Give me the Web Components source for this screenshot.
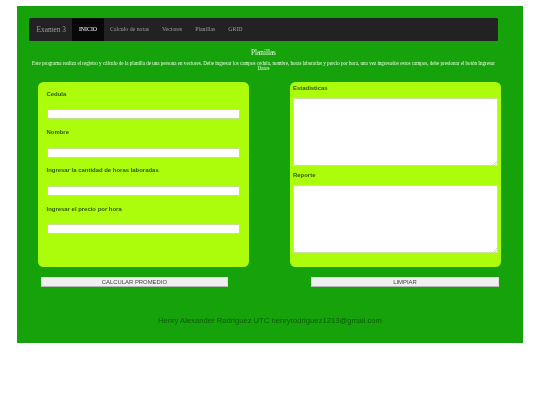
<!DOCTYPE html>
<html lang="es"><head><meta charset="utf-8"><title>Planillas</title>
<style>html,body{margin:0;padding:0;background:#fff}</style></head>
<body>
<x-page>
  <x-nav slot="nav"></x-nav>
  <x-intro slot="intro" heading="Planillas">Este programa realiza el registro y cálculo de la planilla de una persona en vectores. Debe ingresar los campos cedula, nombre, horas laboradas y precio por hora, una vez ingresados estos campos, debe presionar el botón Ingresar Datos</x-intro>
  <x-form-panel slot="left">
    <x-field label="Cedula"></x-field>
    <x-field label="Nombre"></x-field>
    <x-field label="Ingresar la cantidad de horas laboradas"></x-field>
    <x-field label="Ingresar el precio por hora"></x-field>
  </x-form-panel>
  <x-stats-panel slot="right"></x-stats-panel>
  <x-btn slot="btn1">CALCULAR PROMEDIO</x-btn>
  <x-btn slot="btn2">LIMPIAR</x-btn>
  <x-foot slot="foot">Henry Alexander Rodriguez UTC henryrodriguez1213@gmail.com</x-foot>
</x-page>
<script>
function def(name, html, init){
  customElements.define(name, class extends HTMLElement{
    constructor(){super();this.attachShadow({mode:'open'}).innerHTML=html;}
    connectedCallback(){ if(init) init(this); }
  });
}
def('x-page',`<style>
:host{display:block;box-sizing:border-box;width:506px;height:337px;margin:6px 0 0 17px;background:#16a20a;padding:12px 0 0 0;filter:blur(.3px)}
.nav{margin:0 25px 0 12px}
.cols{display:grid;grid-template-columns:211px 211px;column-gap:41px;margin:0 0 0 21px}
.btns{display:grid;grid-template-columns:187.5px 187.5px;column-gap:83px;margin:9.5px 0 0 23.7px}
</style>
<div class="nav"><slot name="nav"></slot></div>
<slot name="intro"></slot>
<div class="cols"><slot name="left"></slot><slot name="right"></slot></div>
<div class="btns"><slot name="btn1"></slot><slot name="btn2"></slot></div>
<slot name="foot"></slot>`);
def('x-nav',`<style>
:host{display:flex;align-items:stretch;height:22.5px;background:#222;box-sizing:border-box;border-radius:1.6px;font:5.85px "Liberation Serif",serif;color:#9d9d9d}
.brand{font-size:7.3px;padding:0 6.4px 0 7.6px;display:flex;align-items:center;color:#9d9d9d}
a{display:flex;align-items:center;padding:0 6.5px;white-space:nowrap}
a.on{background:#080808;color:#fff;}
</style>
<span class="brand">Examen 3</span><a class="on">INICIO</a><a>Calculo de notas</a><a>Vectores</a><a>Planillas</a><a>GRID</a>`);
def('x-intro',`<style>
:host{display:block;height:41.5px;box-sizing:border-box;padding:8.5px 25px 0 12px;text-align:center;font-family:"Liberation Serif",serif;color:#eefbe8}
h2{margin:0 0 3.5px;font-weight:400;font-size:7.2px;line-height:8px;color:#f2fcee}
p{margin:0;font-size:5.07px;line-height:5.5px}
</style><h2></h2><p><slot></slot></p>`, el=>{el.shadowRoot.querySelector('h2').textContent=el.getAttribute('heading');});
def('x-form-panel',`<style>
:host{display:block;box-sizing:border-box;height:185px;background:#acfd0b;border-radius:5.5px;padding:7.5px 9px 0 8.5px}
</style><slot></slot>`);
def('x-field',`<style>
:host{display:block;height:38.4px;font:bold 5.95px/9px "Liberation Sans",sans-serif;color:#2f5a00}
label{display:block;height:20px}
input{display:block;box-sizing:border-box;width:100%;height:10px;margin:-.4px 0 0;padding:0;border:.6px solid #c6dc90;background:#fff;border-radius:.6px}
</style><label></label><input type="text">`, el=>{el.shadowRoot.querySelector('label').textContent=el.getAttribute('label');});
def('x-stats-panel',`<style>
:host{display:block;box-sizing:border-box;height:185px;background:#acfd0b;border-radius:5.5px;padding:2px 3px 0 3px;font:bold 5.95px/8px "Liberation Sans",sans-serif;color:#2f5a00}
label{display:block;height:13.5px;padding-top:0;box-sizing:border-box;line-height:8px}
label.second{height:18.5px;padding-top:5px}
.ta{box-sizing:border-box;height:68.5px;background:#fff;border:.7px solid #cfdfa0;border-radius:.8px;position:relative}
svg{position:absolute;right:.5px;bottom:.5px}
</style>
<label>Estadisticas</label>
<div class="ta" role="textbox"><svg width="4" height="4" viewBox="0 0 4 4"><path d="M0 4L4 0M2 4L4 2" stroke="#aaa" stroke-width=".5"/></svg></div>
<label class="second">Reporte</label>
<div class="ta" role="textbox"><svg width="4" height="4" viewBox="0 0 4 4"><path d="M0 4L4 0M2 4L4 2" stroke="#aaa" stroke-width=".5"/></svg></div>`);
def('x-btn',`<style>
:host{display:flex;align-items:center;justify-content:center;box-sizing:border-box;height:10px;background:#efefef;border:.4px solid #ddd;border-bottom-color:#b5b5b5;font:5.9px "Liberation Sans",sans-serif;color:#444}
</style><slot></slot>`);
def('x-foot',`<style>
:host{display:block;text-align:center;margin:29.5px 0 0 0;font:7.65px/10px "Liberation Sans",sans-serif;color:#0d5c05}
</style><slot></slot>`);
</script>
</body></html>
